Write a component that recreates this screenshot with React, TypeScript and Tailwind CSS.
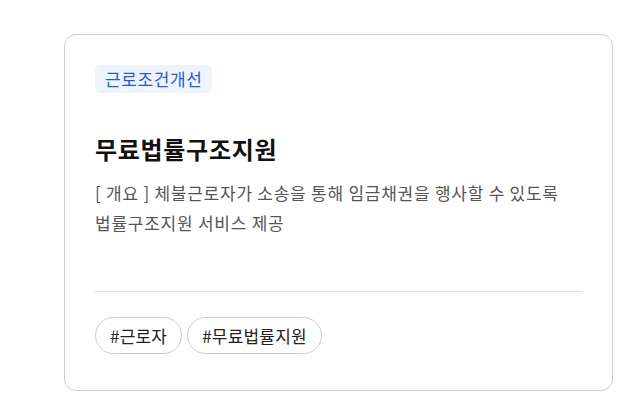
import React from 'react';

const tags = ['#근로자', '#무료법률지원'];

export default function App() {
  return (
    <div className="w-[635px] h-[400px] bg-white pt-[34px] pl-[64px]" style={{ fontFamily: '"Noto Sans CJK KR", "Noto Sans", sans-serif' }}>
      <div className="w-[549px] h-[357px] border border-[#cfcfcf] rounded-[12px] px-[30px] pt-[30px] flex flex-col">
        <div>
          <span className="inline-block h-[28px] leading-[28px] px-[10px] rounded-[5px] bg-[#eef4fd] text-[#2a5bc4] text-[17px] tracking-[0.6px]">
            근로조건개선
          </span>
        </div>
        <h3 className="mt-[40px] text-[24px] font-bold leading-[32px] text-[#111] tracking-[0.7px]">무료법률구조지원</h3>
        <p className="mt-[13px] text-[17px] leading-[30px] text-[#555] tracking-[0.75px]">
          [ 개요 ] 체불근로자가 소송을 통해 임금채권을 행사할 수 있도록
          <br />
          법률구조지원 서비스 제공
        </p>
        <div className="mt-[53px] border-t border-[#dcdcdc]" />
        <div className="mt-[25px] flex gap-[5px]">
          {tags.map((t) => (
            <span key={t} className="h-[37px] leading-[35px] px-[14px] rounded-full border border-[#cccccc] text-[17px] text-[#222] tracking-[0.2px]">
              {t}
            </span>
          ))}
        </div>
      </div>
    </div>
  );
}
